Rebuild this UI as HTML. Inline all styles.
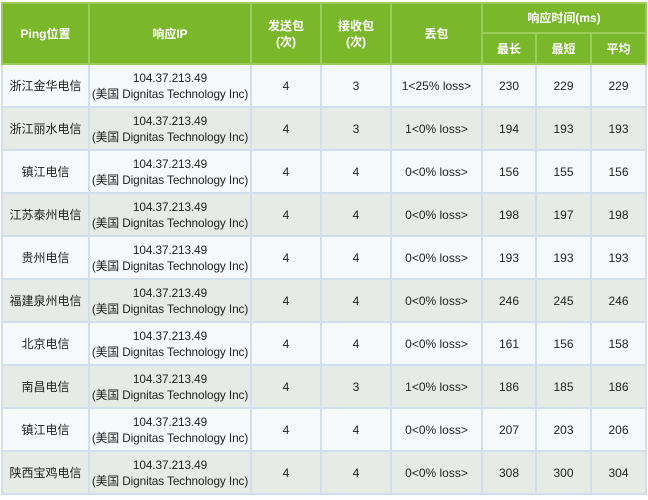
<!DOCTYPE html>
<html style="height:500px;overflow:hidden"><head><meta charset="utf-8"><style>
body{margin:0;background:#fff;width:648px;height:500px;overflow:hidden;position:relative;font-family:"Liberation Sans","Noto Sans CJK SC",sans-serif;font-size:12px;color:#222}
table{position:absolute;left:1px;top:2px;border-collapse:collapse;table-layout:fixed;width:646px}
td,th{border:2px solid #d3deec;text-align:center;padding:0;line-height:16px;white-space:nowrap;overflow:hidden}
th{background:#7ab72b;color:#fff;font-weight:bold;border-color:#9ccd5c}
tr.h1 th{height:28px}
tr.h2 th{height:29px}
tbody tr td{height:41px}
td.ip{font-size:11.8px;letter-spacing:-0.1px}
tbody tr:nth-child(odd) td{background:#f5f9fb}
tbody tr:nth-child(even) td{background:#e7ebe5}
</style></head><body>
<table>
<colgroup><col style="width:87px"><col style="width:162px"><col style="width:70px"><col style="width:70px"><col style="width:91px"><col style="width:54px"><col style="width:55px"><col style="width:55px"></colgroup>
<thead>
<tr class="h1"><th rowspan="2">Ping位置</th><th rowspan="2">响应IP</th><th rowspan="2">发送包<br>(次)</th><th rowspan="2">接收包<br>(次)</th><th rowspan="2">丢包</th><th colspan="3">响应时间(ms)</th></tr>
<tr class="h2"><th>最长</th><th>最短</th><th>平均</th></tr>
</thead>
<tbody>
<tr><td>浙江金华电信</td><td class="ip">104.37.213.49<br>(美国 Dignitas Technology Inc)</td><td>4</td><td>3</td><td>1&lt;25% loss&gt;</td><td>230</td><td>229</td><td>229</td></tr>
<tr><td>浙江丽水电信</td><td class="ip">104.37.213.49<br>(美国 Dignitas Technology Inc)</td><td>4</td><td>3</td><td>1&lt;0% loss&gt;</td><td>194</td><td>193</td><td>193</td></tr>
<tr><td>镇江电信</td><td class="ip">104.37.213.49<br>(美国 Dignitas Technology Inc)</td><td>4</td><td>4</td><td>0&lt;0% loss&gt;</td><td>156</td><td>155</td><td>156</td></tr>
<tr><td>江苏泰州电信</td><td class="ip">104.37.213.49<br>(美国 Dignitas Technology Inc)</td><td>4</td><td>4</td><td>0&lt;0% loss&gt;</td><td>198</td><td>197</td><td>198</td></tr>
<tr><td>贵州电信</td><td class="ip">104.37.213.49<br>(美国 Dignitas Technology Inc)</td><td>4</td><td>4</td><td>0&lt;0% loss&gt;</td><td>193</td><td>193</td><td>193</td></tr>
<tr><td>福建泉州电信</td><td class="ip">104.37.213.49<br>(美国 Dignitas Technology Inc)</td><td>4</td><td>4</td><td>0&lt;0% loss&gt;</td><td>246</td><td>245</td><td>246</td></tr>
<tr><td>北京电信</td><td class="ip">104.37.213.49<br>(美国 Dignitas Technology Inc)</td><td>4</td><td>4</td><td>0&lt;0% loss&gt;</td><td>161</td><td>156</td><td>158</td></tr>
<tr><td>南昌电信</td><td class="ip">104.37.213.49<br>(美国 Dignitas Technology Inc)</td><td>4</td><td>3</td><td>1&lt;0% loss&gt;</td><td>186</td><td>185</td><td>186</td></tr>
<tr><td>镇江电信</td><td class="ip">104.37.213.49<br>(美国 Dignitas Technology Inc)</td><td>4</td><td>4</td><td>0&lt;0% loss&gt;</td><td>207</td><td>203</td><td>206</td></tr>
<tr><td>陕西宝鸡电信</td><td class="ip">104.37.213.49<br>(美国 Dignitas Technology Inc)</td><td>4</td><td>4</td><td>0&lt;0% loss&gt;</td><td>308</td><td>300</td><td>304</td></tr>
</tbody></table>
</body></html>
